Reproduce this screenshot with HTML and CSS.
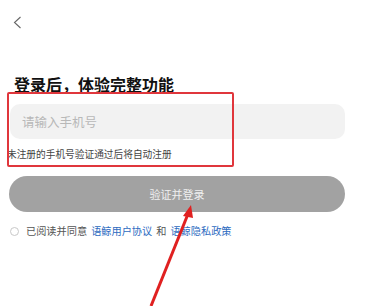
FILE: index.html
```html
<!DOCTYPE html>
<html lang="zh">
<head>
<meta charset="utf-8">
<link rel="stylesheet" href="styles.css">
</head>
<body>
<div class="page">
  <div class="back">
    <svg width="9" height="13" viewBox="0 0 9 13"><path d="M7.5 1 L1.5 6.5 L7.5 12" fill="none" stroke="#666" stroke-width="1.1"/></svg>
  </div>
  <h1 class="title">登录后，体验完整功能</h1>
  <div class="input">请输入手机号</div>
  <div class="hint">未注册的手机号验证通过后将自动注册</div>
  <div class="button">验证并登录</div>
  <div class="agree">
    <span class="radio"></span>
    <span class="gray">已阅读并同意</span>
    <span class="link">语鲸用户协议</span>
    <span class="gray">和</span>
    <span class="link">语鲸隐私政策</span>
  </div>
  <div class="redbox"></div>
  <svg class="arrow" width="366" height="306" viewBox="0 0 366 306">
    <line x1="151" y1="306" x2="188" y2="214" stroke="#e02020" stroke-width="3"/>
    <polygon points="191,205 183,216 193,218" fill="#e02020"/>
  </svg>
</div>
</body>
</html>
```

FILE: styles.css
```css
html, body {
  margin: 0;
  padding: 0;
  background: #fff;
}
body {
  font-family: "Noto Sans CJK SC", "Noto Sans", sans-serif;
}
.page {
  position: relative;
  width: 366px;
  height: 306px;
  overflow: hidden;
}
.back {
  padding: 16px 0 0 13px;
  height: 13px;
  line-height: 0;
}
.title {
  margin: 44px 0 0 14px;
  font-size: 16px;
  line-height: 22px;
  font-weight: 700;
  color: #111;
}
.input {
  margin: 9px 21px 0 10px;
  height: 35px;
  background: #f2f2f2;
  border-radius: 10px;
  box-sizing: border-box;
  padding-left: 12px;
  font-size: 12.5px;
  line-height: 35px;
  color: #b8b8b8;
}
.hint {
  margin: 8px 0 0 7px;
  font-size: 9.7px;
  line-height: 14px;
  color: #444;
}
.button {
  margin: 15px 21px 0 9px;
  height: 36px;
  border-radius: 18px;
  background: #a2a2a2;
  color: #f0f0f0;
  font-size: 11px;
  line-height: 36px;
  text-align: center;
}
.agree {
  margin: 12px 0 0 10px;
  display: flex;
  align-items: center;
  gap: 4px;
  font-size: 10.2px;
  line-height: 14px;
}
.radio {
  width: 7px;
  height: 7px;
  border: 1px solid #c8c8c8;
  border-radius: 50%;
  margin-right: 3px;
}
.gray {
  color: #555;
}
.link {
  color: #2d6bbf;
}
.redbox {
  position: absolute;
  left: 7px;
  top: 92px;
  width: 227px;
  height: 75px;
  box-sizing: border-box;
  border: 2px solid #e0363c;
  border-radius: 2px;
}
.arrow {
  position: absolute;
  left: 0;
  top: 0;
}
```
